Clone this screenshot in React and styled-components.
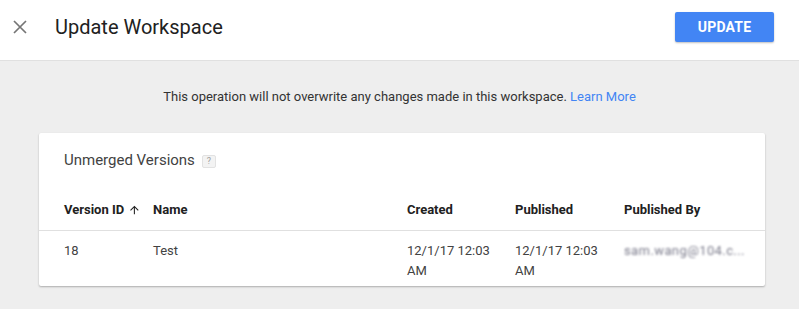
import React from "react";
import styled, { createGlobalStyle } from "styled-components";

const Global = createGlobalStyle`
  html, body { margin: 0; padding: 0; background: #eeeeee; }
  body { font-family: Roboto, "Liberation Sans", Arial, sans-serif; color: #212121; }
  * { box-sizing: border-box; }
`;

const Page = styled.div`
  width: 799px;
  height: 309px;
  background: #eeeeee;
  overflow: hidden;
`;

const TopBar = styled.header`
  height: 61px;
  background: #ffffff;
  border-bottom: 1px solid #e0e0e0;
  display: flex;
  align-items: center;
  padding: 0 25px 0 0;
`;

const CloseButton = styled.button`
  width: 40px;
  height: 40px;
  padding: 0;
  border: none;
  background: transparent;
  display: flex;
  align-items: center;
  justify-content: center;
  cursor: pointer;
  margin-top: -6px;
`;

const Title = styled.h1`
  margin: -6px 0 0 15px;
  font-size: 20px;
  font-weight: 400;
  color: #212121;
  flex: 1;
`;

const PrimaryButton = styled.button`
  width: 99px;
  height: 30px;
  border: none;
  border-radius: 2px;
  background: #4285f4;
  color: #ffffff;
  font-family: Roboto, "Liberation Sans", Arial, sans-serif;
  font-size: 14px;
  font-weight: 700;
  letter-spacing: 0.2px;
  box-shadow: 0 1px 2px rgba(0, 0, 0, 0.25);
  margin-top: -6px;
  cursor: pointer;
`;

const Notice = styled.p`
  margin: 0;
  padding: 26px 0 26px;
  line-height: 20px;
  text-align: center;
  font-size: 13px;
  color: #333333;
`;

const Link = styled.a`
  color: #4285f4;
  text-decoration: none;
`;

const Card = styled.section`
  margin: 0 34px 0 39px;
  background: #ffffff;
  border-radius: 2px;
  box-shadow: 0 1px 2px rgba(0, 0, 0, 0.28);
  padding-top: 17px;
`;

const CardTitle = styled.h2`
  margin: 0 0 0 25px;
  font-size: 15px;
  font-weight: 400;
  line-height: 20px;
  color: #424242;
  display: flex;
  align-items: center;
`;

const HelpBadge = styled.span`
  display: inline-flex;
  align-items: center;
  justify-content: center;
  width: 14px;
  height: 13px;
  margin-left: 7px;
  margin-top: 3px;
  background: #f3f3f3;
  border: 1px solid #e2e2e2;
  border-radius: 2px;
  color: #9e9e9e;
  font-size: 9px;
  line-height: 1;
`;

const Grid = styled.div`
  display: grid;
  grid-template-columns: 89px 254px 108px 109px 1fr;
  padding-left: 25px;
  font-size: 13px;
  line-height: 20px;
`;

const HeadRow = styled(Grid)`
  margin-top: 20px;
  padding-top: 10px;
  padding-bottom: 10px;
  border-bottom: 1px solid #e0e0e0;
  font-weight: 700;
  color: #212121;
  white-space: nowrap;
`;

const BodyRow = styled(Grid)`
  padding-top: 10px;
  padding-bottom: 5px;
  color: #424242;
`;

const Cell = styled.div`
  padding-right: 12px;
  display: flex;
  align-items: flex-start;
`;

const Blurred = styled.span`
  color: #7c7c8c;
  filter: blur(1px);
  white-space: nowrap;
  font-size: 13px;
  letter-spacing: 0.4px;
`;

const SortIcon = () => (
  <svg width="16" height="16" viewBox="0 0 24 24" style={{ marginLeft: 4, marginTop: 2 }}>
    <path d="M4 12l1.41 1.41L11 7.83V20h2V7.83l5.58 5.59L20 12l-8-8-8 8z" fill="#212121" />
  </svg>
);

export default function App() {
  return (
    <Page>
      <Global />
      <TopBar>
        <CloseButton aria-label="Close">
          <svg width="14" height="14" viewBox="0 0 14 14">
            <path d="M1 1L13 13M13 1L1 13" stroke="#757575" strokeWidth="1.7" />
          </svg>
        </CloseButton>
        <Title>Update Workspace</Title>
        <PrimaryButton>UPDATE</PrimaryButton>
      </TopBar>
      <Notice>
        This operation will not overwrite any changes made in this workspace. <Link href="#">Learn More</Link>
      </Notice>
      <Card>
        <CardTitle>
          Unmerged Versions <HelpBadge>?</HelpBadge>
        </CardTitle>
        <HeadRow>
          <Cell>Version ID <SortIcon /></Cell>
          <Cell>Name</Cell>
          <Cell>Created</Cell>
          <Cell>Published</Cell>
          <Cell>Published By</Cell>
        </HeadRow>
        <BodyRow>
          <Cell>18</Cell>
          <Cell>Test</Cell>
          <Cell>12/1/17 12:03 AM</Cell>
          <Cell>12/1/17 12:03 AM</Cell>
          <Cell><Blurred>sam.wang@104.c...</Blurred></Cell>
        </BodyRow>
      </Card>
    </Page>
  );
}
